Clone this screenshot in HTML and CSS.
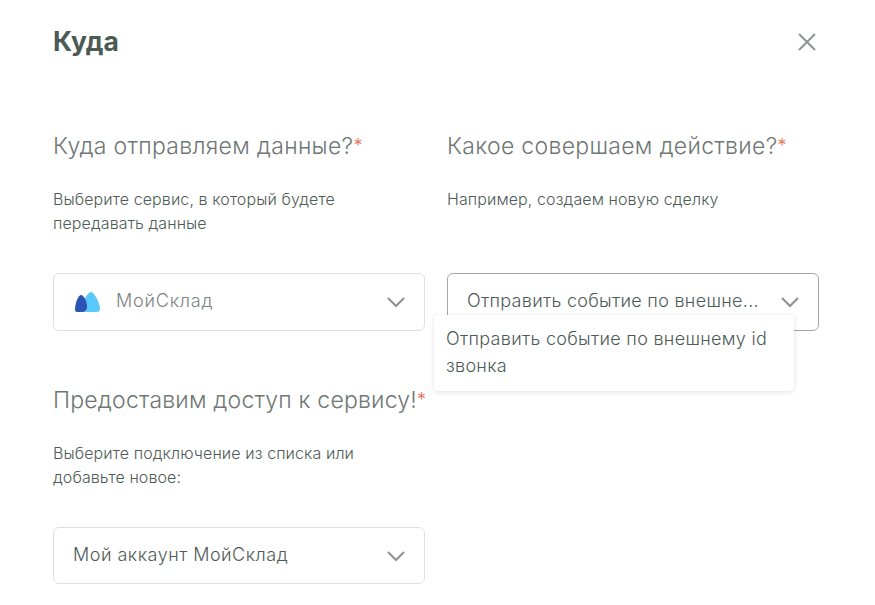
FILE: index.html
```html
<!DOCTYPE html>
<html lang="ru">
<head>
<meta charset="utf-8">
<title>Куда</title>
<link rel="stylesheet" href="styles.css">
</head>
<body>
<main class="modal">
  <header class="head">
    <h1 class="title">Куда</h1>
    <button class="close" aria-label="Закрыть">
      <svg width="20" height="20" viewBox="0 0 20 20"><path d="M2 2l16 16M18 2L2 18" fill="none" stroke="#8f9493" stroke-width="2"/></svg>
    </button>
  </header>
  <div class="grid">
    <section class="field">
      <h2 class="label">Куда отправляем данные?<span class="req">*</span></h2>
      <p class="hint">Выберите сервис, в который будете передавать данные</p>
      <div class="select">
        <svg class="logo" width="27" height="22" viewBox="0 0 27 22">
          <path d="M17 1C20.500 1 26 13 26 18c0 2.400-1.400 3-3.500 3h-11c-2 0-3.500-.8-3.500-3C8 13 13 1 17 1z" fill="#5ac8fd"/>
          <path d="M7 4C10 4 13 11 13 15c0 3.500-1.500 6-5 6H3c-1.500 0-2-1-2-2.500C1 13 4 4 7 4z" fill="#2b53b3"/>
        </svg>
        <span class="value muted">МойСклад</span>
        <svg class="chev" width="20" height="12" viewBox="0 0 20 12"><path d="M2 2l8 8 8-8" fill="none" stroke="#8f9493" stroke-width="2.200"/></svg>
      </div>
    </section>
    <section class="field">
      <h2 class="label">Какое совершаем действие?<span class="req">*</span></h2>
      <p class="hint">Например, создаем новую сделку</p>
      <div class="select active">
        <span class="value">Отправить событие по внешне...</span>
        <svg class="chev" width="20" height="12" viewBox="0 0 20 12"><path d="M2 2l8 8 8-8" fill="none" stroke="#8f9493" stroke-width="2.200"/></svg>
        <div class="tooltip">Отправить событие по внешнему id звонка</div>
      </div>
    </section>
    <section class="field">
      <h2 class="label tight">Предоставим доступ к сервису!<span class="req">*</span></h2>
      <p class="hint">Выберите подключение из списка или добавьте новое:</p>
      <div class="select short">
        <span class="value wide">Мой аккаунт МойСклад</span>
        <svg class="chev" width="20" height="12" viewBox="0 0 20 12"><path d="M2 2l8 8 8-8" fill="none" stroke="#8f9493" stroke-width="2.200"/></svg>
      </div>
    </section>
  </div>
</main>
</body>
</html>
```
FILE: styles.css
```css
* { box-sizing: border-box; }
html, body { margin: 0; height: 100%; background: #fff; overflow: hidden; }
body { font-family: Inter, "Open Sans", sans-serif; color: #4f5b57; }
.modal { padding: 23px 58px 0 53px; }
.head { display: flex; justify-content: space-between; align-items: center; height: 38px; }
.title { margin: 0 0 2px; font-size: 26.500px; font-weight: 700; line-height: 36px; color: #4c5a56; }
.close { border: 0; background: none; padding: 0; width: 20px; height: 20px; }
.close svg { display: block; }
.grid { display: grid; grid-template-columns: 372px 372px; column-gap: 22px; row-gap: 53px; margin-top: 69px; }
.field { display: flex; flex-direction: column; }
.label { margin: 0; font-size: 23px; font-weight: 300; letter-spacing: .3px; line-height: 32px; color: #6f7775; white-space: nowrap; }
.label.tight { letter-spacing: .2px; }
.req { color: #e8694a; font-size: 18px; vertical-align: 2px; letter-spacing: 0; }
.hint { margin: 25px 0 0; font-size: 16px; font-weight: 300; letter-spacing: .1px; line-height: 24px; height: 48px; color: #4f5b57; width: 310px; }
.select { position: relative; display: flex; align-items: center; margin-top: 38px; height: 58px; padding: 0 19px; border: 1px solid #dfe1e1; border-radius: 6px; background: #fff; }
.select.active { border-color: #a3a7a6; }
.select.short { height: 57px; }
.logo { flex: none; margin: 0 15px 0 1px; }
.value { flex: 1; font-size: 18px; font-weight: 300; letter-spacing: .3px; line-height: 24px; color: #4f5b57; white-space: nowrap; overflow: hidden; padding-bottom: 2px; }
.value.muted { color: #7d8482; letter-spacing: .8px; }
.value.wide { letter-spacing: .5px; }
.chev { flex: none; margin-right: -1px; }
.tooltip { position: absolute; left: -14px; top: 41px; width: 360px; height: 76px; padding: 11px 12px; font-size: 18px; font-weight: 300; letter-spacing: .3px; line-height: 26.500px; color: #4f5b57; background: #fff; border-radius: 4px; box-shadow: 0 1px 5px rgba(0,0,0,.12); }
```
